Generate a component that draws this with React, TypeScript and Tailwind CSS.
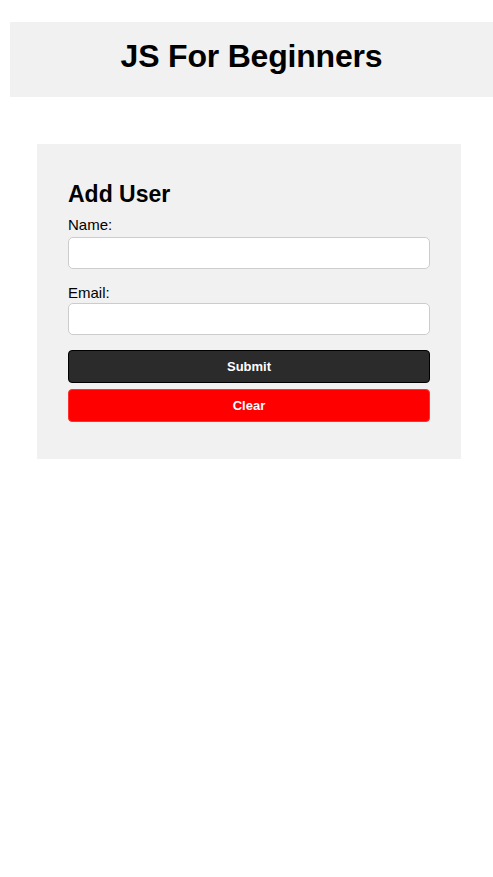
export default function App() {
  return (
    <div className="min-h-[877px] bg-white pt-[22px] pl-[10px] text-black" style={{ fontFamily: '"Liberation Sans", Arial, sans-serif' }}>
      <div className="h-[75px] bg-[#f1f1f1] pt-[18px] text-center">
        <h1 className="text-[32px] font-bold leading-none tracking-[-0.2px]">JS For Beginners</h1>
      </div>
      <div className="ml-[27px] mt-[47px] w-[424px] bg-[#f1f1f1] px-[31px] pt-[36px] pb-[37px]">
        <h2 className="text-[23px] font-bold leading-[28px]">Add User</h2>
        <label className="mt-[8px] block text-[15px] leading-[18px]">Name:</label>
        <input className="mt-[3px] block h-[32px] w-full rounded-[5px] border border-[#cccccc] bg-white" />
        <label className="mt-[15px] block text-[15px] leading-[18px]">Email:</label>
        <input className="mt-[1px] block h-[32px] w-full rounded-[5px] border border-[#cccccc] bg-white" />
        <button className="mt-[15px] block h-[33px] w-full rounded-[4px] border border-black bg-[#2b2b2b] text-[13px] font-bold text-white">Submit</button>
        <button className="mt-[6px] block h-[33px] w-full rounded-[4px] border border-[#ff3030] bg-[#ff0000] text-[13px] font-bold text-white">Clear</button>
      </div>
    </div>
  );
}
